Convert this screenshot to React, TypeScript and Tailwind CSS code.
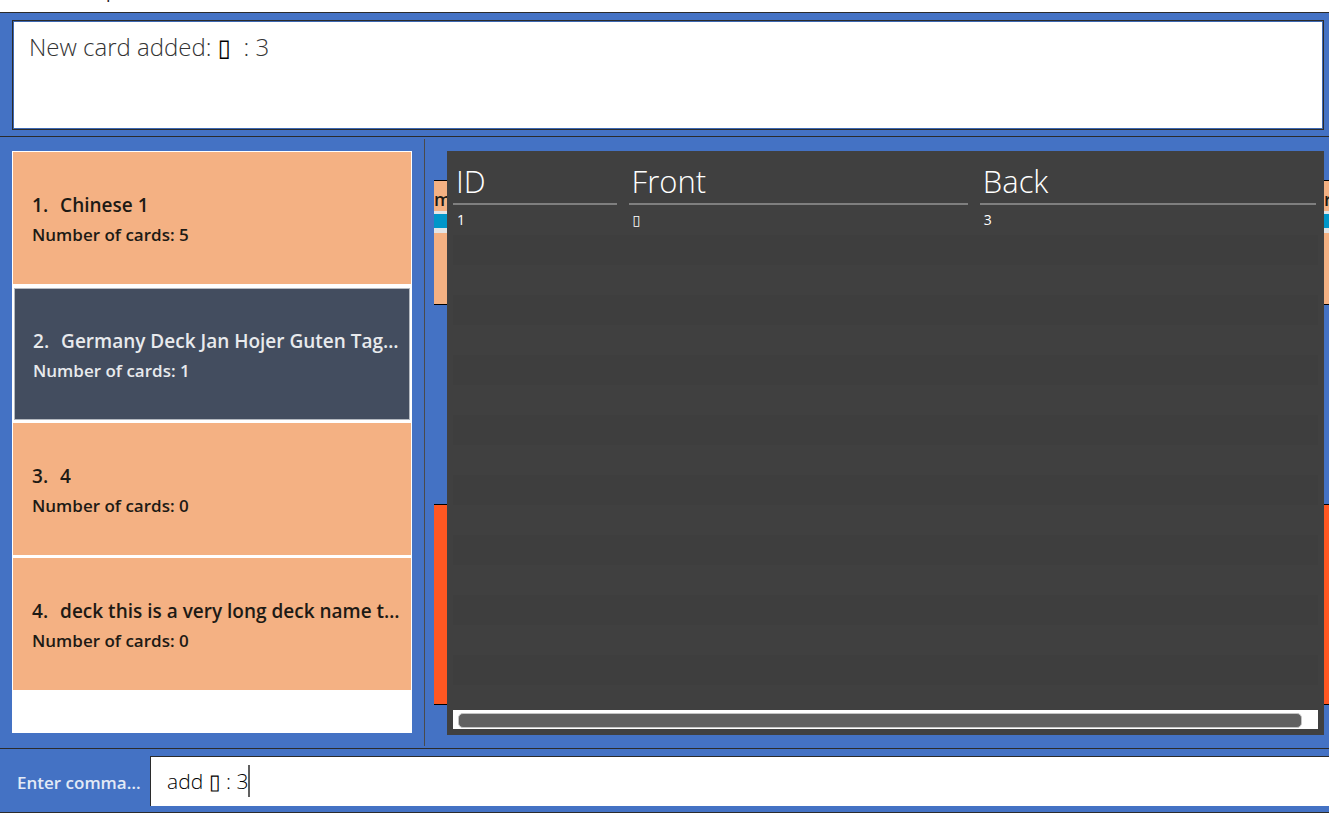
import React from "react";

type Deck = { id: number; name: string; cards: number };

const decks: Deck[] = [
  { id: 1, name: "Chinese 1", cards: 5 },
  { id: 2, name: "Germany Deck Jan Hojer Guten Tag Auf Wiedersehen", cards: 1 },
  { id: 3, name: "4", cards: 0 },
  { id: 4, name: "deck this is a very long deck name to display", cards: 0 },
];

const rows = [{ id: 1, front: "▯", back: "3" }];

const stripes = Array.from({ length: 15 }, (_, i) => i);

function MenuBar() {
  return (
    <nav className="flex h-3 shrink-0 items-end overflow-hidden bg-white pb-[9px] pl-[78px] text-lg leading-6 text-[#222]">
      <button type="button">Help</button>
    </nav>
  );
}

function ResultBox() {
  return (
    <section className="shrink-0 border-y border-[#2b2b2b] bg-[#4472c4] pt-[7px] pr-[5px] pb-[6px] pl-3">
      <div className="border border-[#2b2b2b]">
        <output className="block h-[108px] border border-[#3d68b2] bg-white px-[15px] py-2 text-2xl font-light leading-[34px] text-[#333]">
          New card added: <span className="font-bold text-black">▯</span>
          &nbsp; : 3
        </output>
      </div>
    </section>
  );
}

function DeckItem({ deck, selected }: { deck: Deck; selected: boolean }) {
  return (
    <li
      className={
        selected
          ? "mx-px mt-px flex h-[132px] flex-col justify-center border border-[#b4b9c0] bg-[#434d5f] pt-[2px] pr-2 pl-[18px] text-[#e8eaed]"
          : "flex h-[132px] flex-col justify-center bg-[#f4b183] pt-[2px] pr-2 pl-[19px] text-[#1d1a15]"
      }
    >
      <p className="flex gap-3 text-[19px] leading-[30px]">
        <span>{deck.id}.</span>
        <span className="truncate">{deck.name}</span>
      </p>
      <p className="text-[17px] leading-[29px]">Number of cards: {deck.cards}</p>
    </li>
  );
}

function CardBehind() {
  return (
    <div className="flex flex-col pt-[29px]">
      <div className="flex h-[125px] flex-col border-y border-black bg-[#f4b183]">
        <div className="flex h-[30px] items-end justify-between text-lg leading-6 font-semibold text-[#1d1a15]">
          <span className="w-[13px] overflow-hidden">m</span>
          <span className="w-[5px] overflow-hidden">r</span>
        </div>
        <div className="h-[22px] shrink-0 border-t-[3px] border-b-[5px] border-[#e2e4e6] bg-[#0096c9]" />
      </div>
      <div className="mt-[199px] h-[201px] border-y border-black bg-[#ff5722]" />
    </div>
  );
}

function Heading({ children, last }: { children: string; last?: boolean }) {
  return (
    <span
      className={
        last
          ? "mr-[2px] block border-b-2 border-[#7f7f7f] pt-2 pl-[3px]"
          : "mr-3 block border-b-2 border-[#7f7f7f] pt-2 pl-[3px]"
      }
    >
      {children}
    </span>
  );
}

function CardTable() {
  return (
    <div className="flex flex-col bg-[#404040] px-[6px] pb-[6px] text-white">
      <table className="w-full table-fixed border-collapse text-left">
        <thead className="text-[31px] leading-[44px]">
          <tr>
            <th className="w-[20.3%] p-0 font-light">
              <Heading>ID</Heading>
            </th>
            <th className="w-[40.6%] p-0 font-light">
              <Heading>Front</Heading>
            </th>
            <th className="p-0 font-light">
              <Heading last>Back</Heading>
            </th>
          </tr>
        </thead>
        <tbody className="text-sm leading-[30px]">
          {rows.map((row) => (
            <tr key={row.id}>
              <td className="py-0 pr-0 pl-1">{row.id}</td>
              <td className="py-0 pr-0 pl-1">{row.front}</td>
              <td className="py-0 pr-0 pl-1">{row.back}</td>
            </tr>
          ))}
        </tbody>
      </table>
      <div className="min-h-0 flex-1 overflow-hidden">
        {stripes.map((i) => (
          <div key={i} className="h-[30px] odd:bg-[#3e3e3e]" />
        ))}
      </div>
      <div className="h-[19px] bg-white pt-[3px] pr-4 pb-px pl-[5px]">
        <div className="h-[15px] rounded-[5px] border border-[#c4c4c4] bg-[#606060]" />
      </div>
    </div>
  );
}

function CommandBar() {
  return (
    <form
      onSubmit={(e) => e.preventDefault()}
      className="flex shrink-0 items-stretch border-y border-[#2b2b2b] bg-[#4472c4] pt-[7px] pb-[6px]"
    >
      <label
        htmlFor="command"
        className="w-[150px] truncate pt-1 pr-[9px] pl-[17px] text-[17px] leading-[46px] font-semibold text-[#e3eaf6]"
      >
        Enter command
      </label>
      <div className="relative h-[50px] flex-1 border-t border-l border-[#2b2b2b] bg-white">
        <input
          id="command"
          defaultValue="add ▯ : 3"
          className="h-full w-full bg-transparent pb-[2px] pl-4 text-[21px] font-light text-black caret-transparent outline-none"
        />
        <span className="absolute top-2 left-[97px] h-8 w-[2px] bg-[#606060]" />
      </div>
    </form>
  );
}

export default function App() {
  return (
    <div className="flex h-screen flex-col overflow-hidden bg-white pb-px font-['Open_Sans','DejaVu_Sans',sans-serif]">
      <MenuBar />
      <ResultBox />
      <main className="flex min-h-0 flex-1 bg-[#4472c4]">
        <div className="my-[2px] w-[425px] shrink-0 border-r border-[#4a4a4a] pt-3 pr-3 pb-[13px] pl-3">
          <ul className="flex h-full flex-col gap-[3px] border border-white bg-white font-semibold">
            {decks.map((deck) => (
              <DeckItem key={deck.id} deck={deck} selected={deck.id === 2} />
            ))}
          </ul>
        </div>
        <div className="grid min-w-0 flex-1 pt-[14px] pb-[13px] pl-[9px]">
          <div className="col-start-1 row-start-1 min-w-0">
            <CardBehind />
          </div>
          <div className="z-10 col-start-1 row-start-1 mr-[5px] ml-[13px] grid min-w-0">
            <CardTable />
          </div>
        </div>
      </main>
      <CommandBar />
    </div>
  );
}
